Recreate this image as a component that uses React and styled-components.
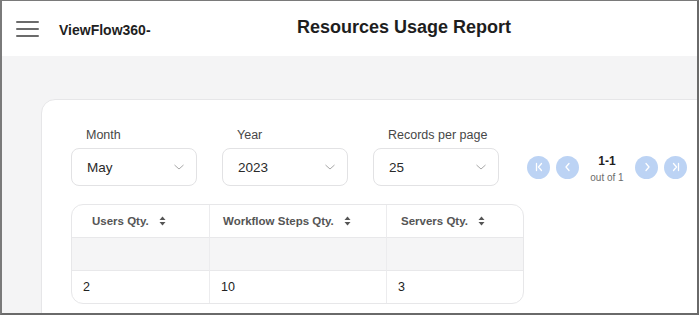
import React from 'react';
import styled, { createGlobalStyle } from 'styled-components';

const GlobalStyle = createGlobalStyle`
    body {
        margin: 0;
        background: #ffffff;
        font-family: "Liberation Sans", Arial, sans-serif;
    }
`;

const Frame = styled.div`
    box-sizing: border-box;
    width: 699px;
    height: 315px;
    border-top: 1px solid #7a7a7a;
    border-left: 2px solid #7a7a7a;
    border-right: 2px solid #6a6a6a;
    border-bottom: 2px solid #6a6a6a;
    overflow: hidden;
    display: flex;
    flex-direction: column;
`;

const Header = styled.header`
    height: 55px;
    flex-shrink: 0;
    background: #ffffff;
    display: flex;
    align-items: center;
    position: relative;
    padding-left: 14px;
`;

const Burger = styled.div`
    width: 23px;
    display: flex;
    flex-direction: column;
    gap: 5px;
    margin-top: 1px;

    span {
        display: block;
        height: 2px;
        background: #6b6b6b;
        border-radius: 1px;
    }
`;

const Brand = styled.div`
    margin-left: 20px;
    font-size: 14px;
    font-weight: 700;
    color: #1f1f1f;
    margin-top: 2px;
`;

const PageTitle = styled.h1`
    margin: 0;
    position: absolute;
    left: 295px;
    top: 16px;
    font-size: 18px;
    font-weight: 700;
    color: #1e1e1e;
`;

const Body = styled.main`
    flex: 1;
    background: #f4f4f5;
    padding: 43px 0 0 39px;
`;

const Card = styled.section`
    width: 720px;
    height: 260px;
    background: #ffffff;
    border: 1px solid #e6e6e8;
    border-radius: 14px;
    padding: 28px 0 0 29px;
    box-sizing: border-box;
`;

const Filters = styled.div`
    display: flex;
    align-items: flex-end;
`;

const Field = styled.div`
    display: flex;
    flex-direction: column;
    margin-right: 25px;
`;

const Label = styled.label`
    font-size: 12.5px;
    color: #474747;
    padding-left: 15px;
    margin-bottom: 5px;
    line-height: 15px;
`;

const Select = styled.div`
    box-sizing: border-box;
    width: 126px;
    height: 38px;
    border: 1px solid #e2e2e4;
    border-radius: 8px;
    display: flex;
    align-items: center;
    justify-content: space-between;
    padding: 0 11px 0 15px;
    font-size: 13.5px;
    color: #2a2a2a;
`;

const Pager = styled.div`
    display: flex;
    align-items: center;
    height: 38px;
    margin-left: 3px;
`;

const PageBtn = styled.div`
    width: 23px;
    height: 23px;
    border-radius: 50%;
    background: #bcd3f4;
    display: flex;
    align-items: center;
    justify-content: center;
    margin-right: ${({ gap }) => gap}px;
`;

const PageInfo = styled.div`
    width: 56px;
    display: flex;
    flex-direction: column;
    align-items: center;
    margin-top: 2px;

    b {
        font-size: 12px;
        color: #1f1f1f;
    }
    small {
        font-size: 10px;
        color: #6c6c6c;
        margin-top: 4px;
    }
`;

const Table = styled.div`
    margin-top: 18px;
    width: 451px;
    border: 1px solid #e7e7e9;
    border-radius: 12px;
    overflow: hidden;
    display: grid;
    grid-template-columns: 137px 177px 1fr;
`;

const HeadCell = styled.div`
    height: 32px;
    display: flex;
    align-items: center;
    gap: 10px;
    padding-left: ${({ pad }) => pad}px;
    font-size: 11.5px;
    font-weight: 700;
    color: #555555;
    border-left: ${({ first }) => (first ? 'none' : '1px solid #ececee')};
    border-bottom: 1px solid #e8e8ea;
`;

const FilterCell = styled.div`
    height: 32px;
    background: #f5f5f6;
    border-left: ${({ first }) => (first ? 'none' : '1px solid #ececee')};
    border-bottom: 1px solid #e8e8ea;
`;

const Cell = styled.div`
    height: 32px;
    display: flex;
    align-items: center;
    padding-left: 11px;
    font-size: 12.5px;
    color: #222222;
    border-left: ${({ first }) => (first ? 'none' : '1px solid #ececee')};
`;

const Chevron = () => (
    <svg width="12" height="8" viewBox="0 0 12 8">
        <path d="M1.5 2l4.5 4 4.5-4" fill="none" stroke="#a8a8a8" strokeWidth="1" />
    </svg>
);

const SortIcon = () => (
    <svg width="7" height="10" viewBox="0 0 7 10">
        <path d="M3.5 0.5L6.5 4H0.5z" fill="#555" />
        <path d="M3.5 9.5L6.5 6H0.5z" fill="#555" />
    </svg>
);

const PagerIcon = ({ d }) => (
    <svg width="12" height="12" viewBox="0 0 12 12">
        <path d={d} fill="none" stroke="#ffffff" strokeWidth="1.3" strokeLinecap="round" strokeLinejoin="round" />
    </svg>
);

const columns = [
    { label: 'Users Qty.', pad: 20, value: '2' },
    { label: 'Workflow Steps Qty.', pad: 13, value: '10' },
    { label: 'Servers Qty.', pad: 14, value: '3' },
];

const filters = [
    { label: 'Month', value: 'May' },
    { label: 'Year', value: '2023' },
    { label: 'Records per page', value: '25' },
];

const App = () => {
    return (
        <>
            <GlobalStyle />
            <Frame>
                <Header>
                    <Burger>
                        <span />
                        <span />
                        <span />
                    </Burger>
                    <Brand>ViewFlow360-</Brand>
                    <PageTitle>Resources Usage Report</PageTitle>
                </Header>
                <Body>
                    <Card>
                        <Filters>
                            {filters.map((f) => (
                                <Field key={f.label}>
                                    <Label>{f.label}</Label>
                                    <Select>
                                        {f.value}
                                        <Chevron />
                                    </Select>
                                </Field>
                            ))}
                            <Pager>
                                <PageBtn gap={6}>
                                    <PagerIcon d="M3.5 2.5v7M8.5 2.5L5.5 6l3 3.5" />
                                </PageBtn>
                                <PageBtn gap={0}>
                                    <PagerIcon d="M7 2.5L4 6l3 3.5" />
                                </PageBtn>
                                <PageInfo>
                                    <b>1-1</b>
                                    <small>out of 1</small>
                                </PageInfo>
                                <PageBtn gap={6}>
                                    <PagerIcon d="M5 2.5L8 6l-3 3.5" />
                                </PageBtn>
                                <PageBtn gap={0}>
                                    <PagerIcon d="M3.5 2.5L6.5 6l-3 3.5M8.5 2.5v7" />
                                </PageBtn>
                            </Pager>
                        </Filters>

                        <Table>
                            {columns.map((c, i) => (
                                <HeadCell key={c.label} pad={c.pad} first={i === 0}>
                                    {c.label}
                                    <SortIcon />
                                </HeadCell>
                            ))}
                            {columns.map((c, i) => (
                                <FilterCell key={c.label} first={i === 0} />
                            ))}
                            {columns.map((c, i) => (
                                <Cell key={c.label} first={i === 0}>{c.value}</Cell>
                            ))}
                        </Table>
                    </Card>
                </Body>
            </Frame>
        </>
    );
};

export default App;
